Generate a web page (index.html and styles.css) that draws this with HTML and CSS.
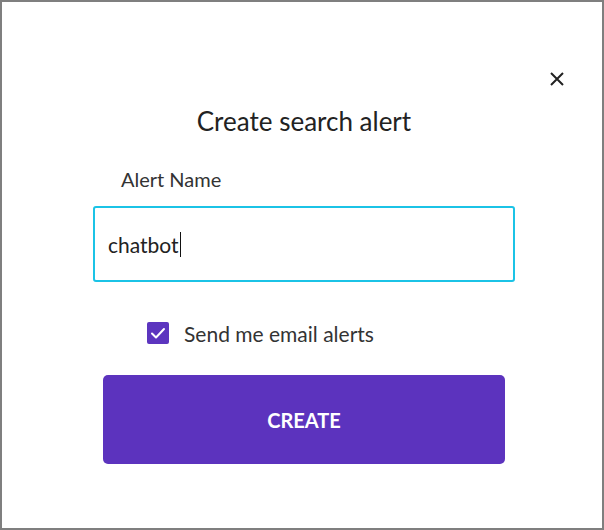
FILE: index.html
```html
<!DOCTYPE html>
<html lang="en">
<head>
    <meta charset="UTF-8">
    <meta name="viewport" content="width=device-width, initial-scale=1.0">
    <title>Create search alert</title>
    <link rel="stylesheet" href="styles.css">
</head>
<body>
    <div class="frame">
        <div class="close-row">
            <button class="close-btn" aria-label="Close">
                <svg width="16" height="16" viewBox="0 0 16 16">
                    <path d="M2 2 L14 14 M14 2 L2 14" stroke="#222" stroke-width="2" fill="none"/>
                </svg>
            </button>
        </div>

        <div class="form">
            <h1 class="title">Create search alert</h1>
            <label class="label">Alert Name</label>
            <div class="field">chatbot<span class="caret"></span></div>

            <div class="check-row">
                <span class="checkbox">
                    <svg width="22" height="22" viewBox="0 0 22 22">
                        <path d="M5 11.5 L9 15.5 L17 7" stroke="#fff" stroke-width="2" fill="none" stroke-linecap="round" stroke-linejoin="round"/>
                    </svg>
                </span>
                <span class="check-label">Send me email alerts</span>
            </div>

            <button class="create-btn">CREATE</button>
        </div>
    </div>
</body>
</html>
```

FILE: styles.css
```css
body {
    margin: 0;
    font-family: Lato, "Open Sans", sans-serif;
    background-color: #fff;
    color: #2b2b2b;
}
.frame {
    width: 604px;
    height: 530px;
    box-sizing: border-box;
    border: 2px solid #7f7f7f;
}
.close-row {
    display: flex;
    justify-content: flex-end;
    padding: 65px 33px 0 0;
}
.close-btn {
    width: 24px;
    height: 24px;
    padding: 0;
    border: none;
    background: none;
    display: flex;
    justify-content: center;
    align-items: center;
    cursor: pointer;
}
.form {
    margin-left: 91px;
    width: 422px;
    display: flex;
    flex-direction: column;
}
.title {
    margin: 14px 0 0;
    font-size: 26px;
    line-height: 32px;
    font-weight: normal;
    text-align: center;
    color: #222;
}
.label {
    margin: 30px 0 0 28px;
    font-size: 20px;
    line-height: 24px;
    color: #333;
}
.field {
    margin-top: 15px;
    height: 76px;
    box-sizing: border-box;
    border: 2px solid #1bc3e6;
    border-radius: 3px;
    padding-left: 13px;
    display: flex;
    align-items: center;
    font-size: 21px;
    color: #222;
}
.caret {
    display: inline-block;
    width: 1px;
    height: 25px;
    background: #111;
    margin-left: 1px;
}
.check-row {
    margin: 39px 0 0 54px;
    height: 24px;
    display: flex;
    align-items: center;
    gap: 15px;
}
.checkbox {
    width: 22px;
    height: 22px;
    background-color: #5c35bf;
    border-radius: 2px;
    display: flex;
}
.check-label {
    font-size: 21px;
    color: #333;
}
.create-btn {
    margin: 30px 0 0 10px;
    width: 402px;
    height: 89px;
    background-color: #5c33be;
    color: white;
    border: none;
    border-radius: 5px;
    font-family: inherit;
    font-size: 20px;
    font-weight: bold;
    cursor: pointer;
}
```
